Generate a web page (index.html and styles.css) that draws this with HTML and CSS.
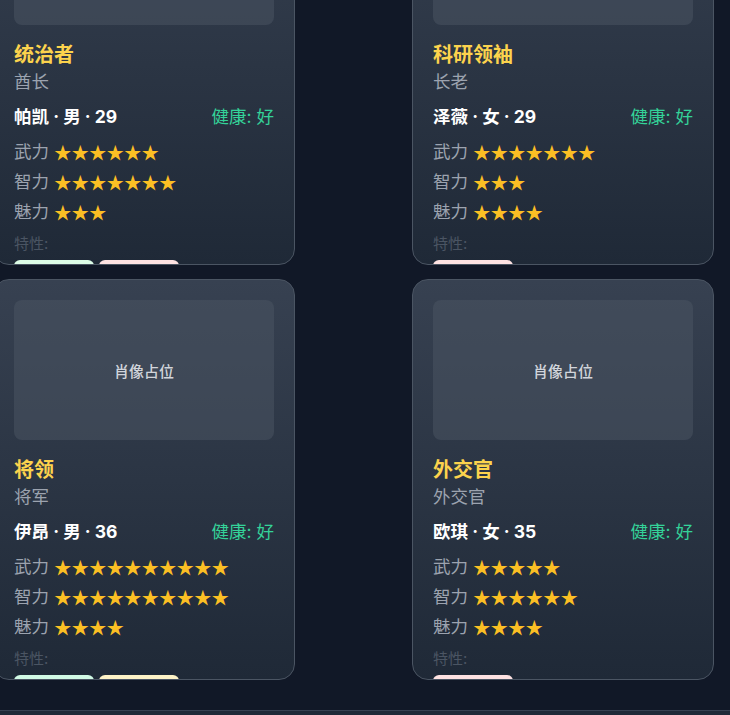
FILE: index.html
```html
<!DOCTYPE html>
<html lang="zh-CN">
<head>
<meta charset="utf-8">
<title>角色卡片</title>
<link rel="stylesheet" href="styles.css">
</head>
<body>
<main class="grid">
  <article class="card">
    <div class="portrait">肖像占位</div>
    <h2 class="title">统治者</h2>
    <div class="role">酋长</div>
    <div class="meta"><span class="name">帕凯 · 男 · 29</span><span class="health">健康: 好</span></div>
    <div class="stats">
      <div class="stat"><span class="label">武力</span><span class="stars">★★★★★★</span></div>
      <div class="stat"><span class="label">智力</span><span class="stars">★★★★★★★</span></div>
      <div class="stat"><span class="label">魅力</span><span class="stars">★★★</span></div>
    </div>
    <div class="traits-label">特性:</div>
    <div class="tags"><span class="tag tag-green"></span><span class="tag tag-pink"></span></div>
  </article>
  <article class="card">
    <div class="portrait">肖像占位</div>
    <h2 class="title">科研领袖</h2>
    <div class="role">长老</div>
    <div class="meta"><span class="name">泽薇 · 女 · 29</span><span class="health">健康: 好</span></div>
    <div class="stats">
      <div class="stat"><span class="label">武力</span><span class="stars">★★★★★★★</span></div>
      <div class="stat"><span class="label">智力</span><span class="stars">★★★</span></div>
      <div class="stat"><span class="label">魅力</span><span class="stars">★★★★</span></div>
    </div>
    <div class="traits-label">特性:</div>
    <div class="tags"><span class="tag tag-pink"></span></div>
  </article>
  <article class="card">
    <div class="portrait">肖像占位</div>
    <h2 class="title">将领</h2>
    <div class="role">将军</div>
    <div class="meta"><span class="name">伊昂 · 男 · 36</span><span class="health">健康: 好</span></div>
    <div class="stats">
      <div class="stat"><span class="label">武力</span><span class="stars">★★★★★★★★★★</span></div>
      <div class="stat"><span class="label">智力</span><span class="stars">★★★★★★★★★★</span></div>
      <div class="stat"><span class="label">魅力</span><span class="stars">★★★★</span></div>
    </div>
    <div class="traits-label">特性:</div>
    <div class="tags"><span class="tag tag-mint"></span><span class="tag tag-cream"></span></div>
  </article>
  <article class="card">
    <div class="portrait">肖像占位</div>
    <h2 class="title">外交官</h2>
    <div class="role">外交官</div>
    <div class="meta"><span class="name">欧琪 · 女 · 35</span><span class="health">健康: 好</span></div>
    <div class="stats">
      <div class="stat"><span class="label">武力</span><span class="stars">★★★★★</span></div>
      <div class="stat"><span class="label">智力</span><span class="stars">★★★★★★</span></div>
      <div class="stat"><span class="label">魅力</span><span class="stars">★★★★</span></div>
    </div>
    <div class="traits-label">特性:</div>
    <div class="tags"><span class="tag tag-pink"></span></div>
  </article>
</main>
<footer class="footer"></footer>
</body>
</html>
```

FILE: styles.css
```css
html, body {
  margin: 0;
  padding: 0;
}
body {
  background: #111827;
  height: 715px;
  overflow: hidden;
  font-family: "Inter", "Noto Sans CJK SC", sans-serif;
  color: #e5e7eb;
}
.grid {
  display: grid;
  grid-template-columns: 302px 302px;
  column-gap: 117px;
  row-gap: 14px;
  margin: -136px 0 0 -7px;
}
.card {
  box-sizing: border-box;
  height: 401px;
  padding: 20px;
  border: 1px solid #4b5563;
  border-radius: 16px;
  background: linear-gradient(to bottom, #374151, #1f2937);
  overflow: hidden;
}
.portrait {
  height: 140px;
  border-radius: 8px;
  background: rgba(75, 85, 99, 0.5);
  display: flex;
  align-items: center;
  justify-content: center;
  font-size: 15px;
  font-weight: 500;
  color: #d1d5db;
}
.title {
  margin: 16px 0 0;
  font-size: 20px;
  line-height: 28px;
  font-weight: 700;
  color: #fcd34d;
}
.role {
  font-size: 17.5px;
  line-height: 26px;
  color: #9ca3af;
}
.meta {
  margin-top: 9px;
  display: flex;
  justify-content: space-between;
  font-size: 17.5px;
  line-height: 26px;
}
.name {
  font-weight: 700;
  color: #ffffff;
}
.health {
  color: #34d399;
}
.stats {
  margin-top: 9px;
  display: flex;
  flex-direction: column;
  gap: 4px;
}
.stat {
  display: flex;
  align-items: center;
  font-size: 17.5px;
  line-height: 26px;
  color: #9ca3af;
}
.label {
  margin-right: 5px;
}
.stars {
  font-family: "Noto Sans CJK SC", sans-serif;
  font-size: 17.5px;
  color: #fbbf24;
}
.traits-label {
  margin-top: 9px;
  font-size: 15px;
  line-height: 20px;
  color: #4b5563;
}
.tags {
  margin-top: 6px;
  display: flex;
  gap: 5px;
}
.tag {
  display: block;
  width: 80px;
  height: 24px;
  border-radius: 6px;
}
.tag-green { background: #dcfce7; }
.tag-mint { background: #d1fae5; }
.tag-pink { background: #fee2e2; }
.tag-cream { background: #fef3c7; }
.footer {
  margin-top: 30px;
  height: 40px;
  border-top: 1px solid #374151;
  background: #1f2937;
}
```
